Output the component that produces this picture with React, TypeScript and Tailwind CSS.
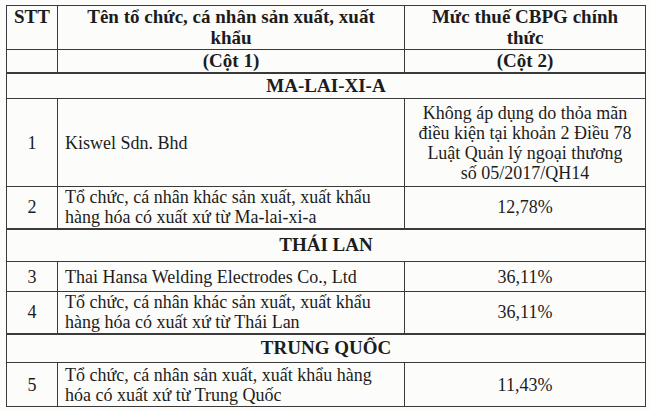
import React from 'react';

type Row =
  | { kind: 'section'; title: string; h: number }
  | { kind: 'item'; stt: string; name: React.ReactNode; rate: React.ReactNode; h: number };

const rows: Row[] = [
  { kind: 'section', title: 'MA-LAI-XI-A', h: 26 },
  {
    kind: 'item',
    stt: '1',
    name: 'Kiswel Sdn. Bhd',
    rate: (
      <>
        Không áp dụng do thỏa mãn
        <br />
        điều kiện tại khoản 2 Điều 78
        <br />
        Luật Quản lý ngoại thương
        <br />
        số 05/2017/QH14
      </>
    ),
    h: 88,
  },
  {
    kind: 'item',
    stt: '2',
    name: (
      <>
        Tổ chức, cá nhân khác sản xuất, xuất khẩu
        <br />
        hàng hóa có xuất xứ từ Ma-lai-xi-a
      </>
    ),
    rate: '12,78%',
    h: 42,
  },
  { kind: 'section', title: 'THÁI LAN', h: 33 },
  { kind: 'item', stt: '3', name: 'Thai Hansa Welding Electrodes Co., Ltd', rate: '36,11%', h: 30 },
  {
    kind: 'item',
    stt: '4',
    name: (
      <>
        Tổ chức, cá nhân khác sản xuất, xuất khẩu
        <br />
        hàng hóa có xuất xứ từ Thái Lan
      </>
    ),
    rate: '36,11%',
    h: 42,
  },
  { kind: 'section', title: 'TRUNG QUỐC', h: 29 },
  {
    kind: 'item',
    stt: '5',
    name: (
      <>
        Tổ chức, cá nhân sản xuất, xuất khẩu hàng
        <br />
        hóa có xuất xứ từ Trung Quốc
      </>
    ),
    rate: '11,43%',
    h: 44,
  },
];

const cell = 'border border-[#3a3a3a] p-0 align-middle';

export default function App() {
  return (
    <div
      className="w-[650px] h-[411px] bg-[#fcfcfb] pt-[5px] pl-[6px] text-[#1c1c1c] text-[18px] leading-[20px]"
      style={{ fontFamily: '"Liberation Serif", "Times New Roman", serif' }}
    >
      <table className="border-collapse table-fixed w-[639px]">
        <colgroup>
          <col className="w-[51px]" />
          <col className="w-[347px]" />
          <col className="w-[241px]" />
        </colgroup>
        <thead className="font-bold text-[19px]">
          {/* Header */}
          <tr className="h-[44px] leading-[21px]">
            <td className={`${cell} text-center !align-top`}>STT</td>
            <td className={`${cell} text-center !align-top`}>
              Tên tổ chức, cá nhân sản xuất, xuất
              <br />
              khẩu
            </td>
            <td className={`${cell} text-center !align-top`}>
              Mức thuế CBPG chính
              <br />
              thức
            </td>
          </tr>
          <tr className="h-[23px]">
            <td className={cell}></td>
            <td className={`${cell} text-center`}>(Cột 1)</td>
            <td className={`${cell} text-center`}>(Cột 2)</td>
          </tr>
        </thead>
        <tbody>
          {rows.map((r, i) =>
            r.kind === 'section' ? (
              <tr key={i} style={{ height: r.h }}>
                <td colSpan={3} className={`${cell} text-center font-bold text-[19px] border-t-2`}>
                  {r.title}
                </td>
              </tr>
            ) : (
              <tr key={i} style={{ height: r.h }}>
                <td className={`${cell} text-center`}>{r.stt}</td>
                <td className={`${cell} pl-[7px] whitespace-nowrap`}>{r.name}</td>
                <td className={`${cell} text-center whitespace-nowrap`}>{r.rate}</td>
              </tr>
            ),
          )}
        </tbody>
      </table>
    </div>
  );
}
